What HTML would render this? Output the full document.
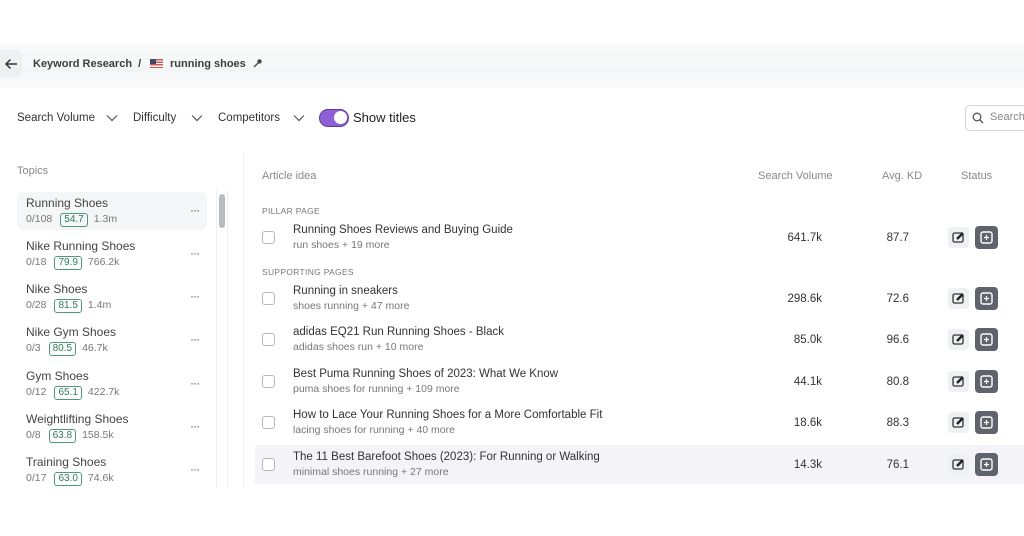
<!DOCTYPE html>
<html><head><meta charset="utf-8"><style>
*{box-sizing:border-box;margin:0;padding:0}
body{width:1024px;height:536px;background:#fff;font-family:"Liberation Sans",sans-serif;position:relative;overflow:hidden;color:#333}
.a{position:absolute;white-space:nowrap}
.topbar{position:absolute;left:0;top:44px;width:1024px;height:44px;background:linear-gradient(#fafbfb,#f4f5f6 60%,#fbfbfc)}
.t{font-size:12px;color:#444}
.s{font-size:10.5px;color:#777}
.badge{display:inline-block;border:1.5px solid #4d9a78;border-radius:3px;color:#2f7a58;font-size:10px;padding:0 3px;line-height:12px;margin:0 6px 0 8px}
.dots{position:absolute;left:190px;font-size:12px;color:#555;letter-spacing:-1px}
.cb{position:absolute;left:262px;width:13px;height:13px;border:1.3px solid #b8b8b8;border-radius:3px;background:#fff}
.num{position:absolute;font-size:11.5px;color:#333;text-align:right}
.ed{position:absolute;left:948px;width:21px;height:21px;background:#eef0f3;border-radius:4px}
.pl{position:absolute;left:975px;width:23px;height:23px;background:#5f636b;border-radius:4px}
</style></head><body>
<div class="topbar"></div>
<div class="a" style="left:0;top:50px;width:22px;height:28px;background:#eef0f2;border-radius:0 6px 6px 0"></div>
<svg class="a" style="left:4px;top:58px" width="14" height="12" viewBox="0 0 14 12"><path d="M13 6H2M6.5 1.5L2 6l4.5 4.5" stroke="#333" stroke-width="1.5" fill="none"/></svg>
<div class="a" style="left:33px;top:58px;font-size:11px;font-weight:bold;color:#3d3d3d">Keyword Research &nbsp;/</div>
<div class="a" style="left:150px;top:59px;width:13px;height:9px;background:repeating-linear-gradient(#c55 0 1.3px,#fff 1.3px 2.6px)"><div style="width:6px;height:5px;background:#446"></div></div>
<div class="a" style="left:170px;top:58px;font-size:11px;font-weight:bold;color:#3d3d3d">running shoes</div>
<svg class="a" style="left:253px;top:58px" width="10" height="10"><path d="M1 9l4-4" stroke="#444" stroke-width="1.3"/><circle cx="6.5" cy="3.5" r="2.2" fill="#444"/></svg>

<div class="a" style="left:17px;top:112px;font-size:11.5px;color:#333">Search Volume</div>
<svg class="a" style="left:106px;top:114px" width="12" height="8"><path d="M1 1.5l5 5 5-5" stroke="#555" fill="none" stroke-width="1.2"/></svg>
<div class="a" style="left:133px;top:112px;font-size:11.5px;color:#333">Difficulty</div>
<svg class="a" style="left:191px;top:114px" width="12" height="8"><path d="M1 1.5l5 5 5-5" stroke="#555" fill="none" stroke-width="1.2"/></svg>
<div class="a" style="left:218px;top:112px;font-size:11.5px;color:#333">Competitors</div>
<svg class="a" style="left:293px;top:114px" width="12" height="8"><path d="M1 1.5l5 5 5-5" stroke="#555" fill="none" stroke-width="1.2"/></svg>
<div class="a" style="left:319px;top:109px;width:30px;height:18px;background:#8f5fd8;border:1.5px solid #5c3aa0;border-radius:9px"><div style="position:absolute;right:1px;top:1px;width:13px;height:13px;background:#fff;border-radius:50%"></div></div>
<div class="a" style="left:353px;top:110px;font-size:13px;color:#222">Show titles</div>
<div class="a" style="left:965px;top:105px;width:70px;height:26px;border:1px solid #d4d4d4;border-radius:5px"></div>
<svg class="a" style="left:972px;top:112px" width="12" height="12"><circle cx="5" cy="5" r="3.8" stroke="#555" fill="none" stroke-width="1.3"/><path d="M8 8l3 3" stroke="#555" stroke-width="1.3"/></svg>
<div class="a" style="left:990px;top:111px;font-size:11px;color:#888">Search</div>

<div class="a" style="left:17px;top:165px;font-size:11px;color:#888">Topics</div>
<div class="a" style="left:17px;top:192px;width:190px;height:38px;background:#f5f6f8;border-radius:6px"></div>
<div class="a" style="left:216px;top:190px;width:12px;height:298px;border-left:1px solid #eee;border-right:1px solid #eee"></div>
<div class="a" style="left:219px;top:194px;width:6px;height:34px;background:#b8bcbf;border-radius:3px"></div>
<div class="a" style="left:243px;top:152px;width:1px;height:336px;background:#f0f0f0"></div>

<div class="a t" style="left:26px;top:196px">Running Shoes</div><div class="a s" style="left:26px;top:213px">0/108<span class="badge">54.7</span>1.3m</div><div class="a dots" style="top:203px">···</div>
<div class="a t" style="left:26px;top:239px">Nike Running Shoes</div><div class="a s" style="left:26px;top:256px">0/18<span class="badge">79.9</span>766.2k</div><div class="a dots" style="top:246px">···</div>
<div class="a t" style="left:26px;top:282px">Nike Shoes</div><div class="a s" style="left:26px;top:299px">0/28<span class="badge">81.5</span>1.4m</div><div class="a dots" style="top:289px">···</div>
<div class="a t" style="left:26px;top:325px">Nike Gym Shoes</div><div class="a s" style="left:26px;top:342px">0/3<span class="badge">80.5</span>46.7k</div><div class="a dots" style="top:332px">···</div>
<div class="a t" style="left:26px;top:369px">Gym Shoes</div><div class="a s" style="left:26px;top:386px">0/12<span class="badge">65.1</span>422.7k</div><div class="a dots" style="top:376px">···</div>
<div class="a t" style="left:26px;top:412px">Weightlifting Shoes</div><div class="a s" style="left:26px;top:429px">0/8<span class="badge">63.8</span>158.5k</div><div class="a dots" style="top:419px">···</div>
<div class="a t" style="left:26px;top:455px">Training Shoes</div><div class="a s" style="left:26px;top:472px">0/17<span class="badge">63.0</span>74.6k</div><div class="a dots" style="top:462px">···</div>

<div class="a" style="left:262px;top:170px;font-size:11px;color:#888">Article idea</div>
<div class="a" style="left:758px;top:170px;font-size:11px;color:#888">Search Volume</div>
<div class="a" style="left:882px;top:170px;font-size:11px;color:#888">Avg. KD</div>
<div class="a" style="left:961px;top:170px;font-size:11px;color:#888">Status</div>
<div class="a" style="left:262px;top:206px;font-size:8.5px;color:#777;letter-spacing:.3px">PILLAR PAGE</div>
<div class="a" style="left:262px;top:267px;font-size:8.5px;color:#777;letter-spacing:.3px">SUPPORTING PAGES</div>
<div class="a" style="left:255px;top:445px;width:769px;height:39px;background:#f4f4f8"></div>

<div id="rows"></div>
<script>
var r=[[237,"Running Shoes Reviews and Buying Guide","run shoes + 19 more","641.7k","87.7"],
[298,"Running in sneakers","shoes running + 47 more","298.6k","72.6"],
[339,"adidas EQ21 Run Running Shoes - Black","adidas shoes run + 10 more","85.0k","96.6"],
[381,"Best Puma Running Shoes of 2023: What We Know","puma shoes for running + 109 more","44.1k","80.8"],
[422,"How to Lace Your Running Shoes for a More Comfortable Fit","lacing shoes for running + 40 more","18.6k","88.3"],
[464,"The 11 Best Barefoot Shoes (2023): For Running or Walking","minimal shoes running + 27 more","14.3k","76.1"]];
var h="";r.forEach(function(x){var y=x[0];
h+='<div class="cb" style="top:'+(y-6)+'px"></div>'+
'<div class="a t" style="left:293px;top:'+(y-13)+'px;font-size:11.5px;color:#333">'+x[1]+'</div>'+
'<div class="a s" style="left:293px;top:'+(y+2)+'px;font-size:10.5px">'+x[2]+'</div>'+
'<div class="num" style="left:760px;width:62px;top:'+(y-5)+'px">'+x[3]+'</div>'+
'<div class="num" style="left:870px;width:39px;top:'+(y-5)+'px">'+x[4]+'</div>'+
'<div class="ed" style="top:'+(y-10)+'px"><svg width="21" height="21"><rect x="5" y="6" width="10" height="9" rx="1.5" stroke="#333" stroke-width="1.3" fill="none"/><path d="M9 12l6-6" stroke="#222" stroke-width="2.5"/></svg></div>'+
'<div class="pl" style="top:'+(y-11)+'px"><svg width="23" height="23"><rect x="6" y="6" width="11" height="11" rx="2" stroke="#fff" stroke-width="1.4" fill="none"/><path d="M11.5 9v5M9 11.5h5" stroke="#fff" stroke-width="1.2"/></svg></div>';});
document.getElementById("rows").innerHTML=h;
</script>
</body></html>
